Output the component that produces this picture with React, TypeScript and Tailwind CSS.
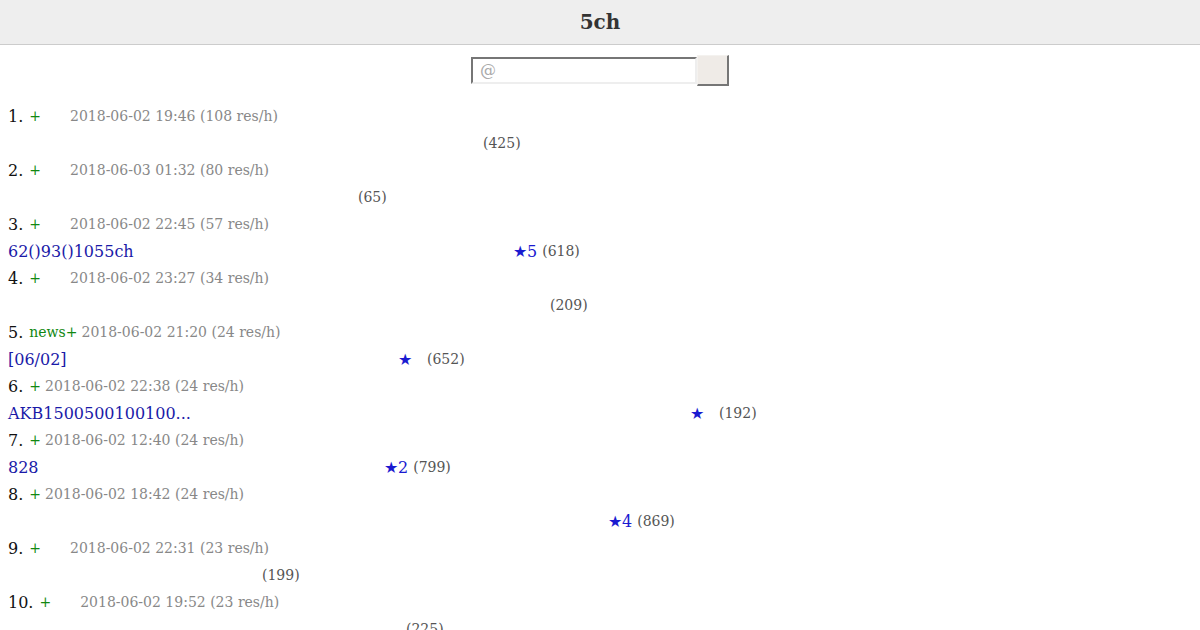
type Thread = {
  num: string;
  board: string;
  gap: number;
  date: string;
  title: string;
  titleW: number;
  star?: string;
  starGap?: boolean;
  count: string;
};

const threads: Thread[] = [
  { num: "1.", board: "+", gap: 25, date: "2018-06-02 19:46 (108 res/h)", title: "", titleW: 475, count: "(425)" },
  { num: "2.", board: "+", gap: 25, date: "2018-06-03 01:32 (80 res/h)", title: "", titleW: 350, count: "(65)" },
  { num: "3.", board: "+", gap: 25, date: "2018-06-02 22:45 (57 res/h)", title: "62()93()1055ch", titleW: 505, star: "★5", count: "(618)" },
  { num: "4.", board: "+", gap: 25, date: "2018-06-02 23:27 (34 res/h)", title: "", titleW: 542, count: "(209)" },
  { num: "5.", board: "news+", gap: 0, date: "2018-06-02 21:20 (24 res/h)", title: "[06/02]", titleW: 390, star: "★", starGap: true, count: "(652)" },
  { num: "6.", board: "+", gap: 0, date: "2018-06-02 22:38 (24 res/h)", title: "AKB1500500100100...", titleW: 682, star: "★", starGap: true, count: "(192)" },
  { num: "7.", board: "+", gap: 0, date: "2018-06-02 12:40 (24 res/h)", title: "828", titleW: 376, star: "★2", count: "(799)" },
  { num: "8.", board: "+", gap: 0, date: "2018-06-02 18:42 (24 res/h)", title: "", titleW: 600, star: "★4", count: "(869)" },
  { num: "9.", board: "+", gap: 25, date: "2018-06-02 22:31 (23 res/h)", title: "", titleW: 254, count: "(199)" },
  { num: "10.", board: "+", gap: 25, date: "2018-06-02 19:52 (23 res/h)", title: "", titleW: 398, count: "(225)" },
];

export default function App() {
  return (
    <div className="min-h-screen bg-white font-['DejaVu_Serif',serif]">
      {/* header */}
      <header className="h-[45px] bg-[#eeeeee] border-b border-[#cccccc] flex items-center justify-center">
        <h1 className="text-[20px] font-bold text-[#333333]">5ch</h1>
      </header>

      {/* search */}
      <form className="flex justify-center items-center mt-[10px]" onSubmit={(e) => e.preventDefault()}>
        <input
          type="text"
          placeholder="@"
          className="w-[226px] h-[27px] bg-white border-2 border-t-[#767676] border-l-[#767676] border-r-[#eeeeee] border-b-[#eeeeee] px-[7px] text-[16px] placeholder:text-[#aaaaaa] outline-none"
        />
        <button
          type="submit"
          className="w-[32px] h-[31px] bg-[#efebe7] border border-t-[#f4f2ef] border-l-[#f4f2ef] border-r-[#767676] border-b-[#767676] border-r-2 border-b-2"
        />
      </form>

      {/* thread list */}
      <div className="px-2 mt-[17px]">
        {threads.map((t) => (
          <div key={t.num}>
            <div className="h-[27px] flex items-center whitespace-nowrap">
              <span className="text-[16px] text-[#111111]">{t.num}</span>
              <span className="text-[14px] text-[#118811] ml-[6px]">{t.board}</span>
              <span className="inline-block" style={{ width: t.gap }} />
              <span className="text-[14px] text-[#888888] ml-[4px]">{t.date}</span>
            </div>
            <div className="h-[27px] flex items-center whitespace-nowrap">
              <span className="inline-block shrink-0 text-[16px] text-[#1a1aa8]" style={{ width: t.titleW }}>
                {t.title}
              </span>
              {t.star && <span className="text-[16px] text-[#1a1ad0]">{t.star}</span>}
              <span className={`text-[14px] text-[#555555] ${t.star ? (t.starGap ? "ml-[15px]" : "ml-[5px]") : ""}`}>
                {t.count}
              </span>
            </div>
          </div>
        ))}
      </div>
    </div>
  );
}
